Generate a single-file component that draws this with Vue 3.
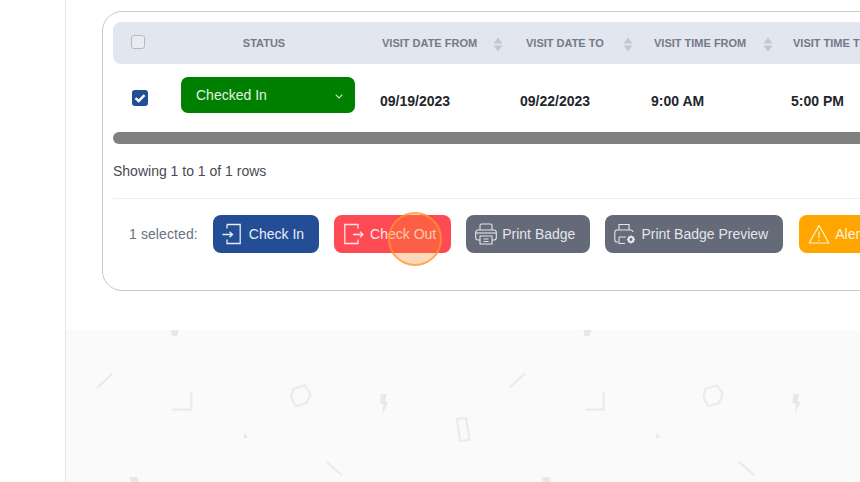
<template>
  <div class="page">
    <aside class="sidebar"></aside>
    <div class="content">
      <main class="main">
        <section class="card">
          <div class="table-row table-head">
            <div class="cell-check"><span class="checkbox"></span></div>
            <div class="head-status">STATUS</div>
            <div v-for="col in sortCols" :key="col" class="head-cell">
              <span>{{ col }}</span>
              <svg class="sort" width="10" height="15" viewBox="0 0 10 15">
                <path d="M5 0.5 9.5 6.5H0.5Z" />
                <path d="M0.5 8.5H9.5L5 14.5Z" />
              </svg>
            </div>
          </div>

          <div class="table-row table-body">
            <div class="cell-check">
              <span class="checkbox checked">
                <svg width="16" height="16" viewBox="0 0 16 16">
                  <path d="M3.5 8.2 6.6 11 12.5 5.2" fill="none" stroke="#fff" stroke-width="2.4" />
                </svg>
              </span>
            </div>
            <div class="cell-status">
              <div class="status-select">
                <span>Checked In</span>
                <svg width="8" height="5" viewBox="0 0 8 5">
                  <path d="M0.7 0.7 4 4 7.3 0.7" fill="none" stroke="#cfe6cf" stroke-width="1.1" />
                </svg>
              </div>
            </div>
            <div v-for="val in rowValues" :key="val" class="body-cell">{{ val }}</div>
          </div>

          <div class="scrollbar"></div>
          <div class="pagination">Showing 1 to 1 of 1 rows</div>

          <div class="actions">
            <span class="selected">1 selected:</span>

            <button class="btn btn-blue">
              <svg width="22" height="22" viewBox="0 0 22 22" fill="none" stroke="currentColor" stroke-width="1.3">
                <path d="M5 1.5H18.2V20.5H5V16.5" />
                <path d="M5 5.5V1.5" />
                <path d="M0.5 11.5H10.5M7.5 8.8 10.5 11.5 7.5 14.2" />
              </svg>
              Check In
            </button>

            <button class="btn btn-red">
              <svg width="22" height="22" viewBox="0 0 22 22" fill="none" stroke="currentColor" stroke-width="1.3">
                <path d="M15 5.5V1.5H1.8V20.5H15V16.5" />
                <path d="M10 11.5H20M17 8.8 20 11.5 17 14.2" />
              </svg>
              Check Out
              <span class="click-ring"></span>
            </button>

            <button class="btn btn-gray">
              <svg width="22" height="22" viewBox="0 0 22 22" fill="none" stroke="currentColor" stroke-width="1.1">
                <path d="M5 7V2.5A1.5 1.5 0 0 1 6.5 1H15.5A1.5 1.5 0 0 1 17 2.5V7" />
                <path d="M5 17H3A2.5 2.5 0 0 1 0.7 14.5V9.5A2.5 2.5 0 0 1 3 7H19A2.5 2.5 0 0 1 21.3 9.5V14.5A2.5 2.5 0 0 1 19 17H17" />
                <path d="M1 10H21" />
                <path d="M5 13H17V21H5Z" />
                <path d="M8.5 16H13.5M8.5 18.5H13.5" />
              </svg>
              Print Badge
            </button>

            <button class="btn btn-gray">
              <svg width="22" height="22" viewBox="0 0 22 22" fill="none" stroke="currentColor" stroke-width="1.1">
                <path d="M5 7V1.5H15V7" />
                <path d="M4 19H3A2.3 2.3 0 0 1 0.8 16.7V9.3A2.3 2.3 0 0 1 3 7H17A2.3 2.3 0 0 1 19 9" />
                <path d="M5 14H12M5 14V20.5H11" />
                <circle cx="17" cy="16.5" r="2.4" stroke-width="2" />
                <path d="M17 12.5V14M17 19V20.5M13 16.5H14.5M19.5 16.5H21M14.2 13.7 15.2 14.7M18.8 18.3 19.8 19.3M19.8 13.7 18.8 14.7M15.2 18.3 14.2 19.3" stroke-width="1.5" />
              </svg>
              Print Badge Preview
            </button>

            <button class="btn btn-orange">
              <svg width="22" height="22" viewBox="0 0 22 22" fill="none" stroke="currentColor" stroke-width="1.2">
                <path d="M11 2.5 20.8 20H1.2Z" stroke-linejoin="round" />
                <path d="M11 8.5V15M11 16.5V18" />
              </svg>
              Alert
            </button>
          </div>
        </section>
      </main>

      <footer class="footer">
        <svg class="pattern" width="794" height="152" viewBox="66 330 794 152">
          <defs>
            <g id="tile">
              <path d="M171 330H179L177 336H172Z" class="solid" />
              <path d="M97.5 387.5 112.5 373.5" />
              <path d="M172.7 409.7H191.3V391.7" />
              <path d="M293 389 304.6 385.4 310.5 394 306.5 403 295.5 406.2 291.2 397.3Z" />
              <path d="M381 394H387L385 401 388 402 382.5 414 383.5 404 380 403Z" class="solid" />
              <path d="M457 419 466 418 469.5 440 460 441Z" />
              <path d="M244 433 248 437 244 439Z" class="solid" />
              <path d="M326.7 461.7 341.7 475.3" />
              <path d="M129 477H137L139 482H131Z" class="solid" />
            </g>
          </defs>
          <use href="#tile" />
          <use href="#tile" x="412.4" />
        </svg>
      </footer>
    </div>
  </div>
</template>

<script setup>
const sortCols = ['VISIT DATE FROM', 'VISIT DATE TO', 'VISIT TIME FROM', 'VISIT TIME TO']
const rowValues = ['09/19/2023', '09/22/2023', '9:00 AM', '5:00 PM']
</script>

<style>
html,
body {
  margin: 0;
  overflow: hidden;
  background: #fff;
}
</style>

<style scoped>
.page {
  display: flex;
  width: 860px;
  height: 482px;
  overflow: hidden;
  font-family: "Liberation Sans", Arial, sans-serif;
  background: #fff;
}

.sidebar {
  flex: 0 0 65px;
  border-right: 1px solid #e6e6e6;
}

.content {
  flex: 1;
  min-width: 0;
  display: flex;
  flex-direction: column;
  overflow: hidden;
}

.main {
  padding: 11px 0 39px 36px;
}

.card {
  box-sizing: border-box;
  width: 1000px;
  height: 280px;
  padding: 10px;
  border: 1px solid #c9c9c9;
  border-radius: 20px;
  background: #fff;
}

.table-row {
  display: grid;
  align-items: center;
}

.table-head {
  grid-template-columns: 55px 200px 140px 130px 140px 1fr;
  height: 42px;
  background: #e2e6ee;
  border-radius: 8px 0 0 8px;
  font-size: 11px;
  font-weight: 700;
  color: #737a89;
}

.table-body {
  grid-template-columns: 55px 200px 140px 131px 140px 1fr;
  height: 68px;
}

.cell-check {
  display: flex;
  padding-left: 18px;
}

.table-head .cell-check {
  padding-bottom: 3px;
}

.checkbox {
  box-sizing: border-box;
  width: 14px;
  height: 14px;
  border: 1px solid #b5bac6;
  border-radius: 3px;
  background: #e9ecf1;
}

.checkbox.checked {
  width: 16px;
  height: 16px;
  margin-left: 1px;
  border: 0;
  background: #234e96;
}

.checkbox svg {
  display: block;
}

.head-status {
  text-align: center;
  padding-right: 8px;
}

.head-cell {
  display: flex;
  align-items: center;
  justify-content: space-between;
  padding: 0 5px 0 14px;
  white-space: nowrap;
}

.head-cell:nth-child(4) {
  padding-left: 18px;
}

.head-cell:nth-child(5) {
  padding-left: 16px;
}

.head-cell:nth-child(6) {
  padding-left: 15px;
}

.sort {
  flex-shrink: 0;
  fill: #c2c7d2;
  margin-top: 2px;
}

.cell-status {
  padding: 0 13px 6px;
}

.status-select {
  display: flex;
  align-items: center;
  justify-content: space-between;
  height: 36px;
  padding: 0 12px 0 15px;
  border-radius: 7px;
  background: #008000;
  color: #e6f2e6;
  font-size: 14px;
}

.status-select svg {
  margin-top: 2px;
}

.body-cell {
  padding: 6px 0 0 12px;
  font-size: 14px;
  font-weight: 700;
  color: #23262c;
  white-space: nowrap;
}

.scrollbar {
  height: 12px;
  background: #808080;
  border-radius: 6px 0 0 6px;
}

.pagination {
  height: 54px;
  line-height: 54px;
  font-size: 14px;
  color: #484b52;
}

.actions {
  display: flex;
  align-items: center;
  gap: 15px;
  padding: 16px 0 0 16px;
  border-top: 1px solid #eef0f3;
}

.selected {
  font-size: 14px;
  color: #6b7280;
  letter-spacing: 0.1px;
}

.btn {
  position: relative;
  display: flex;
  align-items: center;
  gap: 5px;
  height: 38px;
  padding: 0 15px 0 9px;
  border: 0;
  border-radius: 8px;
  font-family: inherit;
  font-size: 14px;
  color: #e9edf5;
  white-space: nowrap;
}

.btn svg {
  flex-shrink: 0;
}

.btn-blue {
  background: #234e96;
}

.btn-red {
  background: #fd4a55;
  color: #ffe6e4;
}

.btn-gray {
  background: #646a78;
  color: #e3e5ea;
}

.btn-orange {
  margin-left: 1px;
  background: #ffa500;
  color: #fff3dc;
}

.click-ring {
  position: absolute;
  left: 54px;
  top: -3px;
  width: 50px;
  height: 50px;
  border: 2px solid rgba(255, 150, 50, 0.75);
  border-radius: 50%;
  background: rgba(255, 140, 40, 0.32);
}

.footer {
  flex: 1;
  background: #fafafa;
}

.pattern {
  display: block;
  fill: none;
  stroke: #ebebeb;
  stroke-width: 2.2;
}

.pattern .solid {
  fill: #e8e8e8;
  stroke: none;
}
</style>
